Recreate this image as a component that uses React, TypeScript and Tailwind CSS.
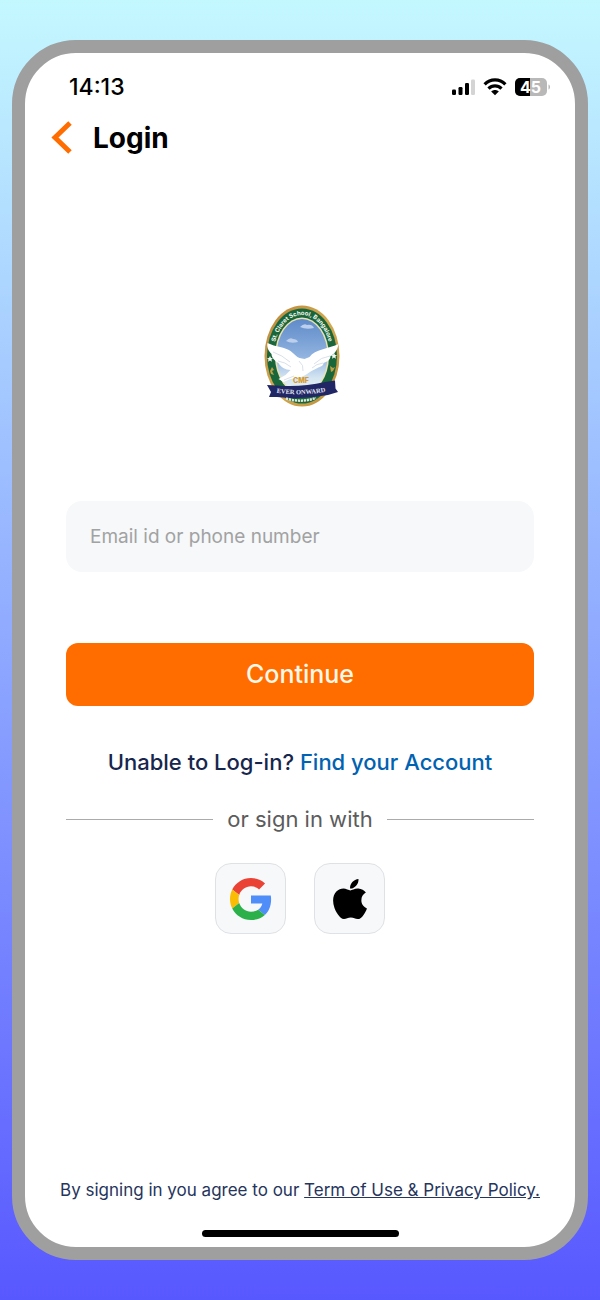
import { FC } from 'react';

const SignalIcon: FC = () => (
  <svg viewBox="0 0 26 18" className="w-[26px] h-[18px]" aria-hidden="true">
    <rect x="3" y="11.5" width="4" height="5.5" rx="1.2" />
    <rect x="9.500" y="9" width="4" height="8" rx="1.2" />
    <rect x="16" y="5" width="4" height="12" rx="1.2" />
    <rect x="22" y="1.500" width="4" height="15.500" rx="1.2" fill="#d4d4d4" />
  </svg>
);

const WifiIcon: FC = () => (
  <svg viewBox="0 0 24 18" className="w-6 h-[18px]" fill="none" stroke="#000" strokeWidth="3.2" aria-hidden="true">
    <path d="M1.600 6.300C7.400.5 16.600.5 22.400 6.300" />
    <path d="M5.500 10.600c3.700-3.700 9.300-3.700 13 0" />
    <path d="M12 17.300 8.200 13.500c2.200-2 5.400-2 7.600 0z" fill="#000" stroke="none" />
  </svg>
);

const BatteryIcon: FC = () => (
  <svg viewBox="0 0 36 18" className="w-9 h-[18px]" role="img" aria-label="Battery 45%">
    <defs>
      <clipPath id="battery">
        <rect width="32" height="18" rx="5" />
      </clipPath>
    </defs>
    <g clipPath="url(#battery)">
      <rect width="32" height="18" fill="#b8b8b8" />
      <rect width="15" height="18" fill="#000" />
    </g>
    <path d="M33.500 6.500c2 .6 2 4.400 0 5z" fill="#b8b8b8" />
    <text x="15.500" y="14.500" textAnchor="middle" fontSize="16" fontWeight="700" fill="#fff">45</text>
  </svg>
);

const SchoolCrest: FC = () => (
  <svg viewBox="-2 0 78 104" className="w-[78px] h-[104px] overflow-visible" role="img" aria-label="St. Claret School, Bangalore">
    <defs>
      <linearGradient id="sky" x1="0" y1="0" x2="0" y2="1">
        <stop offset="0" stopColor="#5f8bc9" />
        <stop offset="0.5" stopColor="#8fb2df" />
        <stop offset="0.8" stopColor="#d5e6f2" />
        <stop offset="1" stopColor="#eef4f4" />
      </linearGradient>
      <linearGradient id="gold" x1="0" y1="0" x2="1" y2="1">
        <stop offset="0" stopColor="#b98338" />
        <stop offset="0.5" stopColor="#d3ab52" />
        <stop offset="1" stopColor="#b98d3a" />
      </linearGradient>
      <path id="name-arc" d="M10.500 51A28.500 41 0 0 1 67.500 51" />
      <path id="motto-arc" d="M12 87.500q26 4 52-1" />
    </defs>
    <ellipse cx="39" cy="51" rx="37.500" ry="50.500" fill="url(#gold)" />
    <ellipse cx="39" cy="51" rx="35" ry="47.500" fill="#1a663b" />
    <ellipse cx="39" cy="51" rx="27" ry="38.500" fill="#e8e2b4" />
    <ellipse cx="39" cy="51" rx="25.500" ry="37" fill="url(#sky)" />
    <path d="M37 22q4-4 7-2 5-1 7 3-8 2-14-1zM23 36q4-4 7-2 4 0 5 3-7 2-12-1z" fill="#bccfec" />
    <text fontSize="6" fontWeight="700" fill="#f3f7ef">
      <textPath href="#name-arc" startOffset="50%" textAnchor="middle">St. Claret School, Bangalore</textPath>
    </text>
    <path d="M7 51l1 2 2 .2-1.600 1.400.5 2.200L7 55.600l-2 1.200.5-2.200L4 53.200l2-.2zM71 48l1 2 2 .2-1.600 1.400.5 2.200-1.900-1.200-2 1.200.5-2.200-1.500-1.400 2-.2z" fill="#f5f8f0" />
    <path d="M9 62l2 3-2 1 2 4-3-1-1-3zM67 61l3 2 2-1-2 4-2 1z" fill="#c0a043" />
    <path d="M4.500 38c8 4 18 4 23 8 4 3 6 6 9 7l5 1 5-2c6-8 18-8 29-13-1 6-4 10-8 12 0 4-4 6-7 7 0 3-4 4-6 5l-6 3-6 4c-5 3-10 3-15 4l-7 3-5-3 7-4 5-5c-5 0-10-3-12-7-4-2-7-6-7-9-3-3-5-7-4-11z" fill="#fff" />
    <path d="M10 47q9 3 17 10M15 56q7 1 13 6M67 51q-9 1-16 8M60 58q-7 1-11 5M21 75l10-4M36 56q5 4 4 10" fill="none" stroke="#ced8e3" strokeWidth="0.800" />
    <text x="38" y="78" textAnchor="middle" fontSize="7" fontWeight="800" fill="#d8992c">CMF</text>
    <path d="M4 80l10 .5q24 2 48-3.500l10-1.500.5 8 2.500 3.500-10 3q-27 5-51 2L6 92l2-5z" fill="#212665" />
    <text fontSize="6.500" fontWeight="700" fill="#e7e8f4" fontFamily="Liberation Serif, serif">
      <textPath href="#motto-arc" startOffset="50%" textAnchor="middle">EVER ONWARD</textPath>
    </text>
    <path d="M23 93.500Q38 98 53 93" fill="none" stroke="#dce8dc" strokeWidth="2.500" strokeDasharray="2.200 0.800" />
  </svg>
);

const GoogleIcon: FC = () => (
  <svg viewBox="0 0 48 48" className="size-[42px]" aria-hidden="true">
    <path fill="#EA4335" d="M24 9.500c3.540 0 6.710 1.220 9.210 3.600l6.850-6.850C35.900 2.380 30.470 0 24 0 14.620 0 6.510 5.380 2.560 13.220l7.980 6.190C12.430 13.720 17.740 9.500 24 9.500z" />
    <path fill="#4f8df8" d="M46.980 24.550c0-1.570-.15-3.090-.38-4.550H24v9.020h12.940c-.58 2.960-2.260 5.480-4.780 7.180l7.730 6c4.510-4.180 7.090-10.360 7.090-17.650z" />
    <path fill="#FBBC05" d="M10.530 28.590c-.48-1.450-.76-2.990-.76-4.590s.27-3.140.76-4.590l-7.980-6.190C.92 16.460 0 20.120 0 24c0 3.880.92 7.540 2.560 10.780l7.970-6.190z" />
    <path fill="#2bb04a" d="M24 48c6.480 0 11.930-2.130 15.890-5.810l-7.730-6c-2.150 1.450-4.920 2.300-8.160 2.300-6.260 0-11.570-4.220-13.470-9.910l-7.980 6.190C6.510 42.620 14.620 48 24 48z" />
  </svg>
);

const AppleIcon: FC = () => (
  <svg viewBox="4 0 376 512" className="w-[34px] h-[46px]" aria-hidden="true">
    <path d="M318.700 268.700c-.2-36.700 16.400-64.400 50-84.800-18.800-26.900-47.200-41.700-84.700-44.600-35.500-2.800-74.300 20.700-88.500 20.700-15 0-49.400-19.700-76.400-19.700C63.300 141.200 4 184.800 4 273.500q0 39.300 14.400 81.200c12.800 36.700 59 126.700 107.200 125.200 25.200-.6 43-17.900 75.800-17.900 31.800 0 48.300 17.900 76.400 17.900 48.600-.7 90.400-82.500 102.600-119.300-65.200-30.700-61.700-90-61.700-91.900zm-56.600-164.200c27.300-32.400 24.800-61.900 24-72.500-24.100 1.400-52 16.400-67.900 34.900-17.500 19.800-27.800 44.300-25.600 71.900 26.100 2 49.900-11.400 69.500-34.300z" />
  </svg>
);

export default function App() {
  return (
    <div className="flex min-h-screen flex-col bg-linear-to-b/srgb from-[#c4f8ff] to-[#5858ff] px-3 py-10 font-[Inter,sans-serif]">
      <main className="flex flex-1 flex-col rounded-[64px] border-[13px] border-[#9f9f9f] bg-white">
        {/* Status bar */}
        <div className="flex items-center justify-between pt-5 pr-6 pl-11">
          <time className="text-[23px] leading-7 font-medium text-black">14:13</time>
          <div className="flex items-center gap-2">
            <SignalIcon />
            <WifiIcon />
            <BatteryIcon />
          </div>
        </div>

        {/* Header */}
        <header className="mt-4 flex items-center gap-5 px-6">
          <button type="button" aria-label="Back" className="py-1">
            <svg viewBox="0 0 24 34" className="w-6 h-[34px]" fill="none" stroke="#ff6d00" strokeWidth="5" aria-hidden="true">
              <path d="M21 2 6 16.500 21 31" />
            </svg>
          </button>
          <h1 className="text-[28px] leading-10 font-bold text-black">Login</h1>
        </header>

        {/* Login form */}
        <div className="mt-[146px] flex flex-col items-center px-[41px]">
          <SchoolCrest />

          <form className="mt-[92px] w-full" onSubmit={(e) => e.preventDefault()}>
            <input
              type="text"
              aria-label="Email id or phone number"
              placeholder="Email id or phone number"
              className="block h-[71px] w-full rounded-2xl bg-[#f6f8fa] px-6 text-[19px] text-gray-900 outline-none placeholder:text-[#a2a2a2]"
            />
            <button
              type="submit"
              className="mt-[71px] block h-[63px] w-full rounded-xl bg-[#ff6d00] text-[25px] font-medium text-[#fff8e8]"
            >
              Continue
            </button>
          </form>

          <p className="mt-10 text-[22px] leading-8 font-medium text-[#17264d]">
            Unable to Log-in? <a href="#find" className="text-[#0062b1]">Find your Account</a>
          </p>

          <div className="mt-[25px] flex w-full items-center gap-[14px]">
            <span className="h-px flex-1 bg-[#ababab]" />
            <span className="text-[22px] leading-8 text-[#5c5c5c]">or sign in with</span>
            <span className="h-px flex-1 bg-[#ababab]" />
          </div>

          <div className="mt-7 flex gap-7">
            <button
              type="button"
              aria-label="Sign in with Google"
              className="flex size-[71px] items-center justify-center rounded-2xl border border-[#dfe2e5] bg-[#f6f8fa]"
            >
              <GoogleIcon />
            </button>
            <button
              type="button"
              aria-label="Sign in with Apple"
              className="flex size-[71px] items-center justify-center rounded-2xl border border-[#dfe2e5] bg-[#f6f8fa]"
            >
              <AppleIcon />
            </button>
          </div>
        </div>

        {/* Footer */}
        <footer className="mt-auto flex flex-col items-center pb-[10px]">
          <p className="text-[17px] leading-6 text-[#26355c]">
            By signing in you agree to our <a href="#terms" className="underline">Term of Use &amp; Privacy Policy.</a>
          </p>
          <div className="mt-7 h-[7px] w-[197px] rounded-full bg-black" />
        </footer>
      </main>
    </div>
  );
}
